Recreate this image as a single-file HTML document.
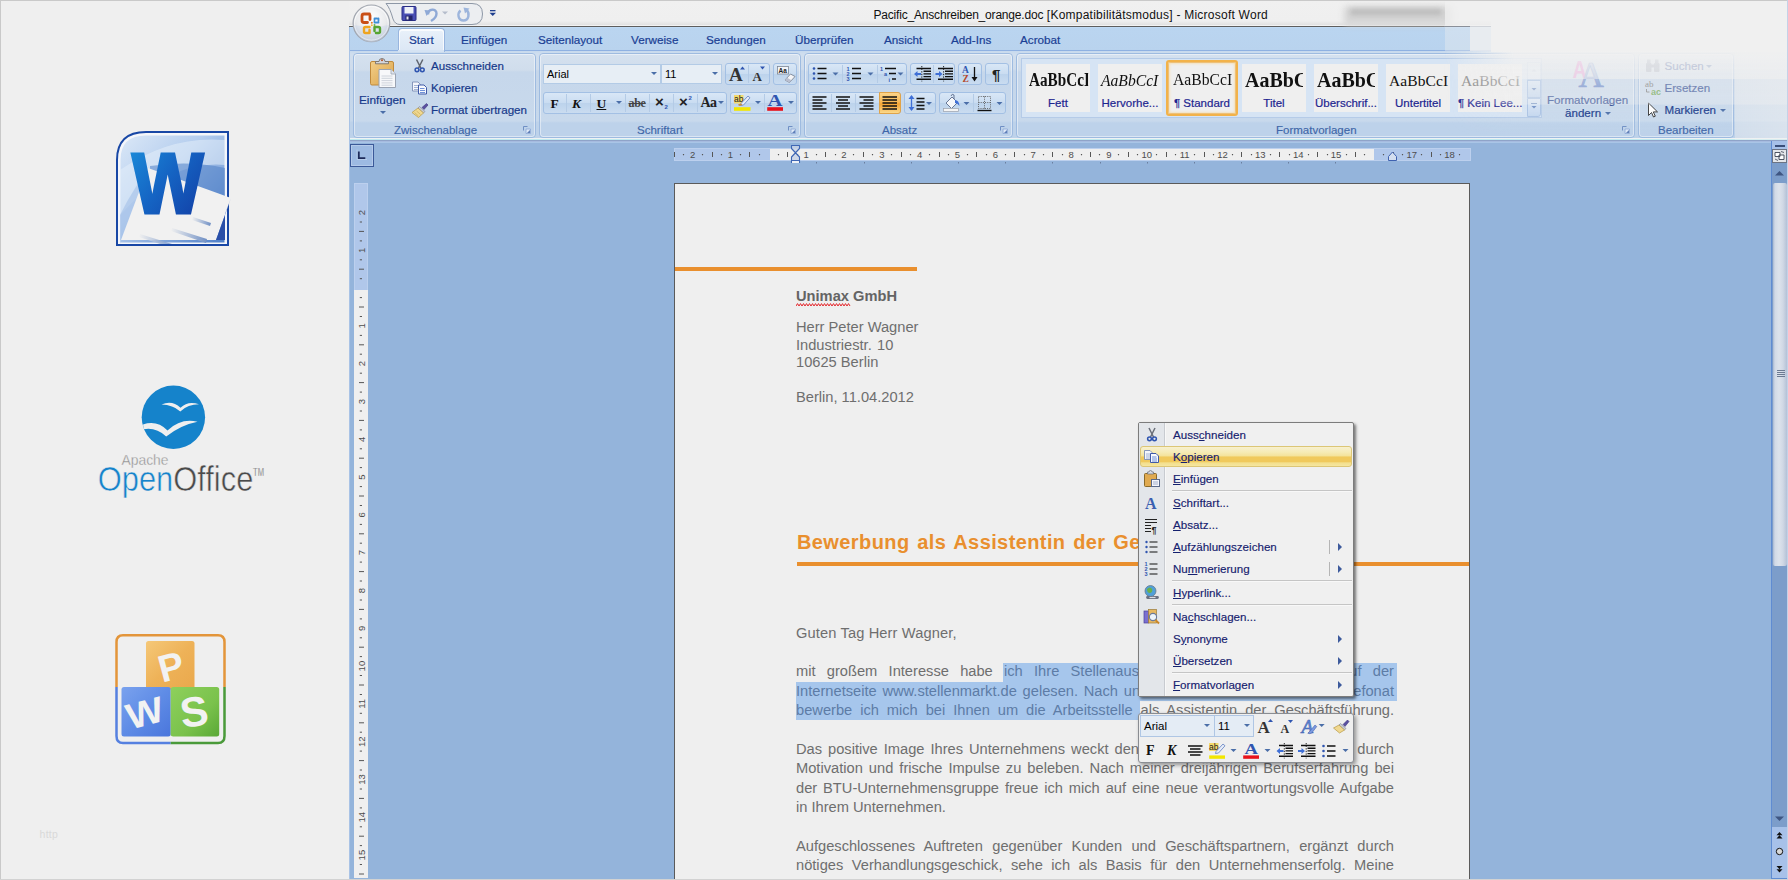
<!DOCTYPE html>
<html lang="de">
<head>
<meta charset="utf-8">
<title>Pacific_Anschreiben_orange.doc - Microsoft Word</title>
<style>
html,body{margin:0;padding:0;}
body{width:1788px;height:880px;overflow:hidden;background:#efefef;position:relative;font-family:"Liberation Sans",sans-serif;font-size:11px;color:#15428b;}
.a{position:absolute;}
.t{position:absolute;white-space:nowrap;line-height:1;}
#frame{position:absolute;left:0;top:0;width:1787px;height:879px;border-left:1px solid #c9c9c9;border-top:1px solid #c9c9c9;box-sizing:border-box;pointer-events:none;z-index:50;}
#frame2{position:absolute;left:0;top:879px;width:1788px;height:1px;background:#d2d2d2;z-index:50;}
#frame3{position:absolute;left:1787px;top:0;width:1px;height:880px;background:#c4d2e8;z-index:50;}
.tab{position:absolute;top:33.300px;font-size:11.700px;color:#1b3f94;-webkit-text-stroke:.2px #1b3f94;white-space:nowrap;line-height:14px;}
.grp{position:absolute;top:53px;height:85px;border:1px solid #9ebbe0;border-radius:4px;box-sizing:border-box;background:linear-gradient(#d5e1ef 0,#d0ddec 16px,#c6d7eb 18px,#c8d9ec 67px,#bdd2ea 69px,#bdd2ea 100%);}
.grp::after{content:"";position:absolute;left:0;top:0;right:0;bottom:0;border:1px solid rgba(255,255,255,.45);border-radius:3px;}
.glab{position:absolute;top:124px;font-size:11px;color:#3e66a8;-webkit-text-stroke:.15px #3e66a8;white-space:nowrap;line-height:13px;text-align:center;}
.rt{position:absolute;margin-top:-.8px;font-size:11px;color:#17398a;-webkit-text-stroke:.2px #17398a;white-space:nowrap;line-height:13px;}
.btng{position:absolute;height:22px;border:1px solid #a3c0e4;border-radius:3px;box-sizing:border-box;background:linear-gradient(#d9e7f6,#c9dcf1 50%,#bcd3ec 51%,#cadcf0);}
.sepv{position:absolute;top:1px;width:1px;height:18px;background:#b4cbe6;}
.combo{position:absolute;height:20px;box-sizing:border-box;border:1px solid #b3cbe6;background:#e7eef5;font-size:11px;color:#000;line-height:18px;padding-left:3px;}
.dd{position:absolute;width:0;height:0;border-left:3px solid transparent;border-right:3px solid transparent;border-top:3px solid #4a6ea8;}
</style>
</head>
<body>
<!-- ===== left panel: logos ===== -->
<svg class="a" style="left:110px;top:125px" width="130" height="130" viewBox="110 125 130 130">
<defs>
<linearGradient id="wbg" x1="0" y1="0" x2="1" y2="1"><stop offset="0" stop-color="#dbe8f7"/><stop offset=".4" stop-color="#b4cdee"/><stop offset="1" stop-color="#4f7fc8"/></linearGradient>
<linearGradient id="wbg2" x1="0" y1="0" x2="1" y2="0"><stop offset="0" stop-color="#cfe0f5" stop-opacity=".9"/><stop offset="1" stop-color="#7da2d8" stop-opacity=".9"/></linearGradient>
<linearGradient id="wfg" x1="0" y1="0" x2="1" y2="1"><stop offset="0" stop-color="#1b8fdb"/><stop offset=".45" stop-color="#1565c4"/><stop offset="1" stop-color="#1238a0"/></linearGradient>
<linearGradient id="pl" x1="0" y1="0" x2="1" y2="0"><stop offset="0" stop-color="#f0f0f0"/><stop offset="1" stop-color="#6f8fc4"/></linearGradient>
<clipPath id="wclip"><path d="M120 244 V160 Q120 135 146 135 H225 V244 Z"/></clipPath>
</defs>
<path d="M117 245 V160 Q117 132 146 132 H228 V245 Z" fill="#f4f6fa" stroke="#1847a5" stroke-width="2" stroke-linejoin="miter"/>
<path d="M120.500 242.500 V160 Q120.500 135.500 146 135.500 H224.500 V242.500 Z" fill="url(#wbg)"/>
<g clip-path="url(#wclip)">
<path d="M120 170 Q170 135 225 140 V165 Q170 160 120 215 Z" fill="#e4eefa" opacity=".55"/>
<path d="M150 166 Q190 160 225 168 V200 L150 175 Z" fill="#4f7fc6" opacity=".55"/>
<path d="M120 215 Q135 185 150 168 L120 244 Z" fill="#a9c4ea" opacity=".7"/>
</g>
<path d="M148 168 L231 198 L216 240 L121 240 Z" fill="#f1f1f1"/>
<path d="M231 198 L216 240 L225 240 L225 214 Z" fill="#2a4fa8"/>
<path d="M193 217 L211 223 L210 226 L192 220 Z" fill="url(#pl)"/>
<path d="M172 228 L207 239 L206 243 L171 231 Z" fill="url(#pl)"/>
<path d="M140 234 L172 244 L160 244 L139 237 Z" fill="url(#pl)" opacity=".8"/>
<text x="167.800" y="212.900" font-family="'Liberation Sans',sans-serif" font-weight="bold" font-size="85.500" text-anchor="middle" textLength="71.500" lengthAdjust="spacingAndGlyphs" fill="url(#wfg)" stroke="url(#wfg)" stroke-width="3" stroke-linejoin="miter">W</text>
</svg>

<svg class="a" style="left:90px;top:380px" width="190" height="130" viewBox="90 380 190 130">
<circle cx="173.400" cy="417.300" r="31.700" fill="#1583cb"/>
<path d="M161.500 404.600 Q172 399.800 180.500 407.800 Q188 400.300 199 404.300 Q188 404.300 180.300 411.400 Q173 405 161.500 404.600 Z" fill="#efefef"/>
<path d="M143 424.500 Q157 419.800 167.500 430.500 Q181 417.800 197.500 421.800 Q181 425 166.200 436.500 Q156 427 143.800 429.200 Z" fill="#efefef"/>
<text x="121.500" y="465.300" font-family="'Liberation Sans',sans-serif" font-size="15" fill="#8c8c8c" stroke="#efefef" stroke-width=".35" textLength="47" lengthAdjust="spacingAndGlyphs">Apache</text>
<text x="97.800" y="491.300" font-family="'Liberation Sans',sans-serif" font-size="35.500" stroke="#efefef" stroke-width=".55" textLength="155.500" lengthAdjust="spacingAndGlyphs"><tspan fill="#1583cb">Open</tspan><tspan fill="#4a4a4a">Office</tspan></text>
<text x="253" y="475.500" font-family="'Liberation Sans',sans-serif" font-size="10" fill="#4a4a4a" stroke="#efefef" stroke-width=".3" textLength="11" lengthAdjust="spacingAndGlyphs">TM</text>
</svg>

<svg class="a" style="left:110px;top:628px" width="124" height="124" viewBox="110 628 124 124">
<defs>
<linearGradient id="po" x1="0" y1="0" x2="1" y2="1"><stop offset="0" stop-color="#f5c878"/><stop offset=".5" stop-color="#eeb258"/><stop offset="1" stop-color="#eaa84c"/></linearGradient>
<linearGradient id="pb" x1="0" y1="0" x2="1" y2="1"><stop offset="0" stop-color="#7aa2ee"/><stop offset=".5" stop-color="#5f8ce6"/><stop offset="1" stop-color="#4a76dc"/></linearGradient>
<linearGradient id="pg" x1="0" y1="0" x2="1" y2="1"><stop offset="0" stop-color="#8ed05c"/><stop offset=".6" stop-color="#7ac24c"/><stop offset="1" stop-color="#5aa836"/></linearGradient>
</defs>
<path d="M116.500 687 V642 Q116.500 635.200 123 635.200 H218 Q224.500 635.200 224.500 642 V687" fill="none" stroke="#e3953a" stroke-width="2.500"/>
<path d="M116.500 687 V736 Q116.500 743 123 743 H170.700" fill="none" stroke="#5580e0" stroke-width="2.500"/>
<path d="M224.500 687 V736 Q224.500 743 218 743 H170.700" fill="none" stroke="#4a9a3a" stroke-width="2.500"/>
<rect x="146" y="641" width="48.500" height="48.500" rx="2.500" fill="url(#po)"/>
<rect x="121.500" y="687" width="49.200" height="49.500" rx="2.500" fill="url(#pb)"/>
<rect x="170.700" y="687" width="48.500" height="49.500" rx="2.500" fill="url(#pg)"/>
<text transform="translate(174.500 679.500) rotate(-15)" font-family="'Liberation Sans',sans-serif" font-weight="bold" font-size="38" text-anchor="middle" fill="#f2f2f2">P</text>
<text transform="translate(148 725) rotate(-15) scale(1.1 1)" font-family="'Liberation Sans',sans-serif" font-weight="bold" font-size="36" text-anchor="middle" fill="#f2f2f2">W</text>
<text transform="translate(196 726) rotate(-8)" font-family="'Liberation Sans',sans-serif" font-weight="bold" font-size="42" text-anchor="middle" fill="#f2f2f2">S</text>
</svg>
<div class="t" style="left:39.500px;top:829px;font-size:10.500px;color:#d9d9d9;letter-spacing:.3px">http</div>
<!-- ===== Word window chrome ===== -->
<div class="a" style="left:349px;top:0;width:1439px;height:880px;background:#94b4db"></div>
<div class="a" style="left:349px;top:0;width:1439px;height:26px;background:linear-gradient(#f0f0f0 0,#efefef 21px,#e1e1e1 25px,#f3f3f3 25px,#f3f3f3 26px)"></div>
<div class="a" style="left:349px;top:26px;width:1095px;height:1px;background:#5e5e5e"></div>
<div class="a" style="left:349px;top:27px;width:1439px;height:24px;background:linear-gradient(#c0dcf8 0,#bad5f0 1.500px,#b9d3ee 100%)"></div>
<div class="a" style="left:349px;top:50px;width:1439px;height:1px;background:#8fb1e2"></div>
<div class="a" style="left:349px;top:51px;width:1439px;height:87px;background:linear-gradient(#c6d9ee 0,#d0deee 3px,#cfdcec 18px,#c5d6ea 20px,#c6d8ec 70px,#bdd2ea 71px,#bdd2ea 100%)"></div>
<div class="a" style="left:349px;top:138px;width:1439px;height:1px;background:#eef2f4"></div>
<div class="a" style="left:349px;top:139px;width:1439px;height:1px;background:#bfeaee"></div>
<div class="a" style="left:349px;top:140px;width:1439px;height:1px;background:#8fa3c8"></div>
<div class="a" style="left:349px;top:141px;width:1439px;height:1px;background:#a6bbdf"></div>
<div class="a" style="left:349px;top:142px;width:1439px;height:1px;background:#a9c5e6"></div>
<!-- left window edge -->
<div class="a" style="left:349px;top:27px;width:1px;height:853px;background:#a9c3e6"></div>

<!-- quick access toolbar -->
<svg class="a" style="left:349px;top:0" width="160" height="52" viewBox="349 0 160 52">
<defs>
<radialGradient id="orb" cx=".5" cy=".35" r=".7"><stop offset="0" stop-color="#ffffff"/><stop offset=".6" stop-color="#e9eaec"/><stop offset="1" stop-color="#b9bec6"/></radialGradient>
</defs>
<path d="M386 3.500 H472 Q482.500 3.500 482.500 14 Q482.500 24.500 472 24.500 H400 Q395 24.500 393 19 Q390 8 386 3.500 Z" fill="#eceef1" stroke="#8d97a6" stroke-width="1"/>
<circle cx="371.400" cy="23.300" r="18.300" fill="url(#orb)" stroke="#a2a7b0" stroke-width="1.200"/>
<circle cx="371.400" cy="23.300" r="16.800" fill="none" stroke="#ffffff" stroke-width="1" opacity=".8"/>
<path d="M354.500 25 a17 17 0 0 0 34 0 q-17 4 -34 0 z" fill="#c9d6ea" opacity=".45"/>
<!-- office logo -->
<g fill="none" stroke-linejoin="round" stroke-linecap="round">
<path d="M369.500 14 H364 Q362 14 362 16 V20.500 Q362 22.500 364 22.500 H367.500 M370 19.500 V15.500" stroke="#c94f16" stroke-width="2.800"/>
<path d="M374.500 18.500 H378.500 V22.500 H374.500 Z" stroke="#3f8fd6" stroke-width="1.800" stroke-dasharray="2.500 1.200"/>
<path d="M369.500 27 H365.500 Q364 27 364 28.500 V31.500 Q364 33 365.500 33 H369.500 V30" stroke="#eea420" stroke-width="2.400"/>
<path d="M374.500 31 V27 H378.500 Q380 27 380 28.500 V31.500 Q380 33 378.500 33 H376" stroke="#55a532" stroke-width="2.400"/>
</g>
<circle cx="371.800" cy="22.800" r="1" fill="#e07b28"/><circle cx="374.500" cy="25" r="1" fill="#6ab04a"/><circle cx="371.800" cy="25.200" r="1" fill="#f0b83a"/>
<!-- save icon -->
<rect x="402" y="6.500" width="14" height="14" rx="1" fill="#4a4fb5" stroke="#2a2e86" stroke-width="1"/>
<rect x="404.500" y="7" width="9" height="6.500" fill="#eef1f8"/>
<rect x="405.500" y="15.500" width="7" height="5" fill="#23246a"/>
<rect x="406.500" y="16.500" width="2" height="3" fill="#e6e6ee"/>
<!-- undo -->
<path d="M428 14.500 C428 8.500 436.500 8 436.500 13.500 C436.500 17 433.500 19.500 431 21" fill="none" stroke="#8fa9d6" stroke-width="2.400"/>
<path d="M424.500 10 L430.500 10.500 L426.500 16 Z" fill="#8fa9d6"/>
<path d="M442 11.500 h6 l-3 3 z" fill="#b4bccb"/>
<!-- redo -->
<path d="M466.500 10 C470 13 469 20.500 463.500 20.500 C458 20.500 457 13.500 460.500 10.500" fill="none" stroke="#9db5dc" stroke-width="2.400"/>
<path d="M463.500 7.500 L469.500 8.500 L465 13.500 Z" fill="#9db5dc"/>
<!-- customize -->
<rect x="490" y="10" width="5.500" height="1.300" fill="#1f3f8f"/>
<path d="M489.500 12.700 h6.500 l-3.250 3.400 z" fill="#1f3f8f"/>
</svg>

<div class="t" style="left:873.500px;top:7.900px;font-size:12px;line-height:14px;color:#111"><span style="letter-spacing:-.19px">Pacific_Anschreiben_orange.doc</span><span style="letter-spacing:.24px"> [Kompatibilitätsmodus] - Microsoft Word</span></div>
<!-- blurred area in title bar -->
<div class="a" style="left:1344px;top:6px;width:108px;height:19px;background:#d4d4d4;filter:blur(3px);border-radius:4px"></div>
<div class="a" style="left:1350px;top:9px;width:92px;height:6px;background:#b8b8b8;filter:blur(2.500px);border-radius:3px;opacity:.9"></div>
<div class="a" style="left:1349px;top:25px;width:95px;height:1px;background:#e4e4e4"></div>
<!-- tabs -->
<div class="a" style="left:397.500px;top:28px;width:47px;height:24px;box-sizing:border-box;border:1px solid #98b5de;border-bottom:none;border-radius:4px 4px 0 0;background:linear-gradient(#e9f1fa,#dbe7f5);box-shadow:inset 0 1px 0 1px rgba(255,255,255,.75)"></div>
<div class="a" style="left:398px;top:50px;width:46px;height:2px;background:#d5e3f3"></div>
<div class="tab" style="left:409px">Start</div>
<div class="tab" style="left:461px">Einfügen</div>
<div class="tab" style="left:538px">Seitenlayout</div>
<div class="tab" style="left:631px">Verweise</div>
<div class="tab" style="left:706px">Sendungen</div>
<div class="tab" style="left:795px">Überprüfen</div>
<div class="tab" style="left:884px">Ansicht</div>
<div class="tab" style="left:951px">Add-Ins</div>
<div class="tab" style="left:1020px">Acrobat</div>
<!-- ===== Ribbon: Zwischenablage ===== -->
<div class="grp" style="left:353px;width:183px"></div>
<svg class="a" style="left:366px;top:56px" width="34" height="34" viewBox="366 56 34 34">
<defs><linearGradient id="clip1" x1="0" y1="0" x2="1" y2="1"><stop offset="0" stop-color="#f3cf88"/><stop offset="1" stop-color="#d9a24a"/></linearGradient></defs>
<rect x="370.500" y="61.500" width="23" height="23.500" rx="1.500" fill="url(#clip1)" stroke="#c08a3c" stroke-width="1"/>
<path d="M375.500 63.800 h13 v-2.300 h-3.500 a3 3 0 0 0 -6 0 h-3.500 z" fill="#d3d6dc" stroke="#77706a" stroke-width=".9"/>
<circle cx="382" cy="60.300" r="1" fill="#b5542a"/>
<path d="M379 69.500 h12 l4.500 4.500 v13.500 h-16.500 z" fill="#f7f8fa" stroke="#9aa3b2" stroke-width="1"/>
<path d="M391 69.500 v4.500 h4.500" fill="#e2e6ee" stroke="#9aa3b2" stroke-width=".8"/>
<path d="M381.500 76 h11 M381.500 78.300 h11 M381.500 80.600 h11 M381.500 82.900 h11 M381.500 85.200 h11" stroke="#c4c9d3" stroke-width=".8"/>
</svg>
<div class="rt" style="left:359px;top:94.800px;font-size:11.800px">Einfügen</div>
<div class="dd" style="left:379.500px;top:111px"></div>
<!-- scissors -->
<svg class="a" style="left:410px;top:57px" width="20" height="18" viewBox="410 57 20 18">
<path d="M416.500 59.500 L420.800 68 M422.800 59.500 L418.500 68" stroke="#5f646e" stroke-width="1.500" fill="none"/>
<circle cx="417" cy="69.800" r="1.900" fill="none" stroke="#2f55b0" stroke-width="1.500"/>
<circle cx="422.300" cy="69.800" r="1.900" fill="none" stroke="#2f55b0" stroke-width="1.500"/>
</svg>
<div class="rt" style="left:431px;top:60px;font-size:11.600px">Ausschneiden</div>
<!-- copy -->
<svg class="a" style="left:410px;top:79px" width="20" height="18" viewBox="410 79 20 18">
<path d="M412.500 82 h5.500 l2.500 2.500 v6.500 h-8 z" fill="#f4f6fb" stroke="#7c8db4" stroke-width=".9"/>
<path d="M414 85.500 h4.500 M414 87.500 h4.500 M414 89.500 h4.500" stroke="#8fa4cc" stroke-width=".8"/>
<path d="M418.500 85 h5.500 l2.500 2.500 v6.500 h-8 z" fill="#f7f9fd" stroke="#3f5aa8" stroke-width="1"/>
<path d="M420 88.500 h4.500 M420 90.500 h5 M420 92.500 h5" stroke="#5f84d4" stroke-width=".9"/>
</svg>
<div class="rt" style="left:431px;top:82px;font-size:11.600px">Kopieren</div>
<!-- format painter -->
<svg class="a" style="left:410px;top:101px" width="20" height="18" viewBox="410 101 20 18">
<path d="M422 107.500 L426.500 103.500 L428 105 L424 109.500 Z" fill="#5a4fa0" stroke="#3d3680" stroke-width=".6"/>
<path d="M419.500 106.500 L425 111.500 L423.500 113 L418 108 Z" fill="#c9ccd4" stroke="#7d828e" stroke-width=".6"/>
<path d="M418 108 L423.500 113 L418.500 117.500 L412 112.500 Z" fill="#f0d890" stroke="#b79a45" stroke-width=".7"/>
<path d="M414.500 112.500 L418.500 116 M416.500 111 L420.500 114.500" stroke="#c9ad5a" stroke-width=".7"/>
</svg>
<div class="rt" style="left:431px;top:104px;font-size:11.600px">Format übertragen</div>
<div class="glab" style="left:394px;font-size:11.500px">Zwischenablage</div>
<svg class="a" style="left:522px;top:125px" width="10" height="10" viewBox="0 0 10 10"><path d="M1.500 5.500 V1.500 H5.500" fill="none" stroke="#6f8fc4" stroke-width="1"/><path d="M4 4 h4.500 v4.500 h-4.500 z" fill="#dfeaf8" stroke="#8aa6d4" stroke-width=".8"/><path d="M8 8 L8 5 L5 8 Z" fill="#5f7fb8"/></svg>

<!-- ===== Ribbon: Schriftart ===== -->
<div class="grp" style="left:539px;width:262px"></div>
<div class="combo" style="left:543px;top:64px;width:118px">Arial</div>
<div class="dd" style="left:650.500px;top:72px"></div>
<div class="combo" style="left:661px;top:64px;width:61px">11</div>
<div class="dd" style="left:711.500px;top:72px"></div>
<div class="btng" style="left:725px;top:63px;width:45px"><div class="sepv" style="left:21.500px"></div></div>
<div class="t" style="left:729px;top:65px;font-family:'Liberation Serif',serif;font-weight:bold;font-size:19px;color:#333">A</div>
<div class="t" style="left:752.500px;top:70px;font-family:'Liberation Serif',serif;font-weight:bold;font-size:13px;color:#333">A</div>
<svg class="a" style="left:738px;top:64px" width="30" height="10" viewBox="738 64 30 10"><path d="M740 69.500 l2.500 -3 l2.500 3 z" fill="#2f55b0"/><path d="M760 66.500 h5 l-2.500 3 z" fill="#2f55b0"/></svg>
<div class="btng" style="left:773px;top:63px;width:24px"></div>
<svg class="a" style="left:775px;top:64px" width="22" height="20" viewBox="775 64 22 20">
<rect x="777.500" y="66.500" width="11" height="7.500" fill="#f3f5fa" stroke="#7d8796" stroke-width=".8"/>
<text x="778.500" y="73" font-family="'Liberation Sans',sans-serif" font-size="6.500" fill="#222" font-weight="bold">Aa</text>
<path d="M785 80 L790.500 74 L795 76.500 L789.500 82.500 Z" fill="#f4f4f6" stroke="#7d8796" stroke-width=".9"/>
<path d="M785 80 L787 77.800 L791.500 80.300 L789.500 82.500 Z" fill="#b9bfd0"/>
</svg>
<!-- row 2 -->
<div class="btng" style="left:543px;top:92px;width:184px">
<div class="sepv" style="left:21.500px"></div><div class="sepv" style="left:45.500px"></div><div class="sepv" style="left:80.500px"></div><div class="sepv" style="left:105px"></div><div class="sepv" style="left:128.500px"></div><div class="sepv" style="left:152.500px"></div></div>
<div class="t" style="left:550.500px;top:97px;font-family:'Liberation Serif',serif;font-weight:bold;font-size:13.500px;color:#111">F</div>
<div class="t" style="left:572px;top:97px;font-family:'Liberation Serif',serif;font-weight:bold;font-style:italic;font-size:13.500px;color:#111">K</div>
<div class="t" style="left:596.500px;top:97px;font-family:'Liberation Serif',serif;font-weight:bold;font-size:13.500px;color:#111;text-decoration:underline">U</div>
<div class="dd" style="left:615.500px;top:101px"></div>
<div class="t" style="left:628.500px;top:97px;font-family:'Liberation Serif',serif;font-weight:bold;font-size:12px;color:#444;text-decoration:line-through;letter-spacing:-.3px">abe</div>
<div class="t" style="left:655px;top:94px;font-family:'Liberation Sans',sans-serif;font-weight:bold;font-size:15px;color:#222">×</div>
<div class="t" style="left:664.500px;top:104px;font-family:'Liberation Sans',sans-serif;font-weight:bold;font-size:6px;color:#2f55b0">2</div>
<div class="t" style="left:679px;top:94px;font-family:'Liberation Sans',sans-serif;font-weight:bold;font-size:15px;color:#222">×</div>
<div class="t" style="left:688.500px;top:95px;font-family:'Liberation Sans',sans-serif;font-weight:bold;font-size:6px;color:#2f55b0">2</div>
<div class="t" style="left:700.500px;top:96px;font-family:'Liberation Serif',serif;font-weight:bold;font-size:14px;color:#222;letter-spacing:-.5px">Aa</div>
<div class="dd" style="left:717.500px;top:101px"></div>
<div class="btng" style="left:730px;top:92px;width:67px"><div class="sepv" style="left:33px"></div></div>
<svg class="a" style="left:732px;top:93px" width="64" height="20" viewBox="732 93 64 20">
<rect x="734" y="95" width="9.500" height="8.500" fill="#f3d96c"/>
<text x="734" y="102" font-family="'Liberation Sans',sans-serif" font-size="8.500" fill="#222">ab</text>
<path d="M741 103.500 L748 96 L750 97.800 L743.500 105 L740.500 105.500 Z" fill="#e8edf8" stroke="#5f7fc0" stroke-width=".8"/>
<path d="M738 104.500 l3 -1 l1.500 1.500 l-3.500 1 z" fill="#c98b3a"/>
<rect x="734" y="107.200" width="16.500" height="3.600" fill="#f2e600"/>
<text x="767.500" y="106" font-family="'Liberation Serif',serif" font-weight="bold" font-size="16" fill="#2f55b0" textLength="15" lengthAdjust="spacingAndGlyphs">A</text>
<rect x="767.200" y="107.200" width="15.800" height="3.600" fill="#e8121c"/>
</svg>
<div class="dd" style="left:754.500px;top:101px"></div>
<div class="dd" style="left:787.500px;top:101px"></div>
<div class="glab" style="left:637px;font-size:11.500px">Schriftart</div>
<svg class="a" style="left:787px;top:125px" width="10" height="10" viewBox="0 0 10 10"><path d="M1.500 5.500 V1.500 H5.500" fill="none" stroke="#6f8fc4" stroke-width="1"/><path d="M4 4 h4.500 v4.500 h-4.500 z" fill="#dfeaf8" stroke="#8aa6d4" stroke-width=".8"/><path d="M8 8 L8 5 L5 8 Z" fill="#5f7fb8"/></svg>
<!-- ===== Ribbon: Absatz ===== -->
<div class="grp" style="left:804px;width:209px"></div>
<div class="btng" style="left:808px;top:63px;width:99px"><div class="sepv" style="left:33px"></div><div class="sepv" style="left:67.500px"></div></div>
<div class="btng" style="left:910px;top:63px;width:45px"><div class="sepv" style="left:21.500px"></div></div>
<div class="btng" style="left:958px;top:63px;width:24px"></div>
<div class="btng" style="left:985px;top:63px;width:24px"></div>
<svg class="a" style="left:808px;top:63px" width="202" height="22" viewBox="808 63 202 22">
<!-- bullets -->
<g fill="#2f55b0"><circle cx="814" cy="68.500" r="1.300"/><circle cx="814" cy="73.500" r="1.300"/><circle cx="814" cy="78.500" r="1.300"/></g>
<path d="M817.500 68.500 h9 M817.500 73.500 h9 M817.500 78.500 h9" stroke="#111" stroke-width="1.300"/>
<path d="M832.500 72.500 h6 l-3 3 z" fill="#4a6ea8"/>
<!-- numbering -->
<g font-family="'Liberation Sans',sans-serif" font-size="5.500" font-weight="bold" fill="#2f55b0"><text x="846.500" y="70.500">1</text><text x="846.500" y="75.500">2</text><text x="846.500" y="80.500">3</text></g>
<path d="M852 68.500 h9 M852 73.500 h9 M852 78.500 h9" stroke="#111" stroke-width="1.300"/>
<path d="M867.500 72.500 h6 l-3 3 z" fill="#4a6ea8"/>
<!-- multilevel -->
<g font-family="'Liberation Sans',sans-serif" font-size="5.500" font-weight="bold" fill="#2f55b0"><text x="880" y="70.500">1</text><text x="884" y="76">a</text><text x="888.500" y="81.500">i</text></g>
<path d="M885 68.500 h11 M889 73.500 h7 M892 79 h4" stroke="#111" stroke-width="1.300"/>
<path d="M897.500 72.500 h6 l-3 3 z" fill="#4a6ea8"/>
<!-- outdent -->
<path d="M916.500 68.500 h14.500 M923.500 71.200 h7.500 M923.500 73.900 h7.500 M923.500 76.600 h7.500 M916.500 79.300 h14.500" stroke="#111" stroke-width="1.400"/>
<path d="M914 73.900 l3.500 -3 v2 h3.500 v2 h-3.500 v2 z" fill="#3f6fd6"/>
<path d="M921.800 66 v16" stroke="#111" stroke-width=".9" stroke-dasharray="1.300 1.300"/>
<!-- indent -->
<path d="M938 68.500 h15 M945 71.200 h8 M945 73.900 h8 M945 76.600 h8 M938 79.300 h15" stroke="#111" stroke-width="1.400"/>
<path d="M942.500 73.900 l-3.500 -3 v2 h-3.500 v2 h3.500 v2 z" fill="#3f6fd6"/>
<path d="M943.600 66 v16" stroke="#111" stroke-width=".9" stroke-dasharray="1.300 1.300"/>
<!-- sort -->
<text x="962" y="73" font-family="'Liberation Serif',serif" font-size="9.500" font-weight="bold" fill="#2f55b0">A</text>
<text x="962.500" y="81.500" font-family="'Liberation Serif',serif" font-size="9.500" font-weight="bold" fill="#b5482a">Z</text>
<path d="M974.500 67 v12" stroke="#111" stroke-width="1.300"/><path d="M971.500 77 h6 l-3 4.500 z" fill="#111"/>
<!-- pilcrow -->
<text x="992" y="80" font-family="'Liberation Sans',sans-serif" font-size="15" font-weight="bold" fill="#222">¶</text>
</svg>
<!-- row 2 -->
<div class="btng" style="left:808px;top:92px;width:93px"><div class="a" style="left:70px;top:-1px;width:22px;height:22px;background:linear-gradient(#fbd48a,#f9b954 45%,#f5a433 55%,#fbd98c);border:1px solid #e0a349;box-sizing:border-box;border-radius:0 3px 3px 0"></div><div class="sepv" style="left:21.500px"></div><div class="sepv" style="left:45.500px"></div></div>
<div class="btng" style="left:904px;top:92px;width:32px"></div>
<div class="btng" style="left:939px;top:92px;width:67px"><div class="sepv" style="left:33px"></div></div>
<svg class="a" style="left:808px;top:92px" width="202" height="22" viewBox="808 92 202 22">
<path d="M812.500 97.500 h14 M812.500 100.500 h10 M812.500 103.500 h14 M812.500 106.500 h10 M812.500 109.500 h14" stroke="#111" stroke-width="1.300" transform="translate(0 -.5)"/>
<path d="M836 97 h14 M838 100 h10 M836 103 h14 M838 106 h10 M836 109 h14" stroke="#111" stroke-width="1.300"/>
<path d="M859.500 97 h14 M863.500 100 h10 M859.500 103 h14 M863.500 106 h10 M859.500 109 h14" stroke="#111" stroke-width="1.300"/>
<path d="M882.500 97 h14.500 M882.500 100 h14.500 M882.500 103 h14.500 M882.500 106 h14.500 M882.500 109 h14.500" stroke="#111" stroke-width="1.500"/>
<!-- line spacing -->
<path d="M911.500 96 v14" stroke="#3f6fd6" stroke-width="1.300"/><path d="M908.500 99 l3 -4 l3 4 z M908.500 107 l3 4 l3 -4 z" fill="#3f6fd6"/>
<path d="M916.500 98.500 h8 M916.500 102 h8 M916.500 105.500 h8 M916.500 109 h8" stroke="#111" stroke-width="1.300"/>
<path d="M926 102 h6 l-3 3 z" fill="#4a6ea8"/>
<!-- shading bucket -->
<path d="M946 103 l6 -6 l5.500 5.500 l-6 6 z" fill="#f5f7fb" stroke="#5a6a8a" stroke-width=".9"/>
<path d="M951 96 q1 -3 3 -1 v4" fill="none" stroke="#5a6a8a" stroke-width=".9"/>
<path d="M955 100 q4 0 4.500 6 q-2 -3 -4.500 -3 z" fill="#3f6fd6"/>
<rect x="943.500" y="108.500" width="15" height="3" fill="#f4f4f4" stroke="#9aa0ac" stroke-width=".7"/>
<path d="M963.500 102 h6 l-3 3 z" fill="#4a6ea8"/>
<!-- borders -->
<path d="M978.500 96.500 h12 v12 h-12 z M984.500 96.500 v12 M978.500 102.500 h12" fill="none" stroke="#555" stroke-width=".9" stroke-dasharray="1 1.200"/>
<path d="M977.500 110.500 h14" stroke="#111" stroke-width="1.400"/>
<path d="M996.500 102 h6 l-3 3 z" fill="#4a6ea8"/>
</svg>
<div class="glab" style="left:882px;font-size:11.500px">Absatz</div>
<svg class="a" style="left:999px;top:125px" width="10" height="10" viewBox="0 0 10 10"><path d="M1.500 5.500 V1.500 H5.500" fill="none" stroke="#6f8fc4" stroke-width="1"/><path d="M4 4 h4.500 v4.500 h-4.500 z" fill="#dfeaf8" stroke="#8aa6d4" stroke-width=".8"/><path d="M8 8 L8 5 L5 8 Z" fill="#5f7fb8"/></svg>

<!-- ===== Ribbon: Formatvorlagen ===== -->
<div class="grp" style="left:1016px;width:619px"></div>
<div class="a" style="left:1021px;top:58px;width:521px;height:60px;box-sizing:border-box;border:1px solid #b5cbe8;background:#d6e4f4"></div>
<style>
.sty{position:absolute;top:64px;width:64px;height:48px;background:#efefef;}
.sts{position:absolute;white-space:nowrap;line-height:1;color:#111;font-family:"Liberation Serif",serif;}
.stl{position:absolute;top:97px;width:64px;text-align:center;font-size:11.500px;line-height:13px;color:#1d2590;-webkit-text-stroke:.2px #1d2590;white-space:nowrap;}
</style>
<div class="sty" style="left:1026px"></div>
<div class="sty" style="left:1098px"></div>
<div class="a" style="left:1166px;top:60px;width:72px;height:56px;box-sizing:border-box;border:2px solid #f2b24a;border-radius:3px;background:#efefef;box-shadow:inset 0 0 3px 1px #f9d58c,inset 0 0 0 1px #d69a58"></div>
<div class="sty" style="left:1242px"></div>
<div class="sty" style="left:1314px"></div>
<div class="sty" style="left:1386px"></div>
<div class="sty" style="left:1458px"></div>
<div class="sts" style="left:1029px;top:70.500px;font-size:18px;font-weight:bold;width:70px;overflow:hidden;transform:scaleX(.845);transform-origin:0 0">AaBbCcI</div>
<div class="sts" style="left:1101px;top:71.500px;font-size:17px;font-style:italic;transform:scaleX(.92);transform-origin:0 0">AaBbCcI</div>
<div class="sts" style="left:1173px;top:71.300px;font-size:17.500px;transform:scaleX(.894);transform-origin:0 0">AaBbCcI</div>
<div class="sts" style="left:1245px;top:69.500px;font-size:21px;font-weight:bold;width:61px;overflow:hidden;transform:scaleX(.95);transform-origin:0 0">AaBbC</div>
<div class="sts" style="left:1317px;top:69.500px;font-size:21px;font-weight:bold;width:61px;overflow:hidden;transform:scaleX(.95);transform-origin:0 0">AaBbC</div>
<div class="sts" style="left:1389px;top:73px;font-size:15.500px;letter-spacing:.1px">AaBbCcI</div>
<div class="sts" style="left:1461px;top:73px;font-size:15.500px;letter-spacing:.1px;color:#8a8a8a">AaBbCcI</div>
<div class="stl" style="left:1026px">Fett</div>
<div class="stl" style="left:1098px">Hervorhe...</div>
<div class="stl" style="left:1170px">¶ Standard</div>
<div class="stl" style="left:1242px">Titel</div>
<div class="stl" style="left:1314px">Überschrif...</div>
<div class="stl" style="left:1386px">Untertitel</div>
<div class="stl" style="left:1458px">¶ Kein Lee...</div>
<!-- gallery scroll buttons -->
<div class="a" style="left:1527px;top:62px;width:14px;height:18px;box-sizing:border-box;border:1px solid #c3d5ec;background:#d9e6f5"></div>
<div class="a" style="left:1527px;top:80px;width:14px;height:18px;box-sizing:border-box;border:1px solid #a9c2e4;background:linear-gradient(#dce8f6,#c3d7ef)"></div>
<div class="a" style="left:1527px;top:98px;width:14px;height:19px;box-sizing:border-box;border:1px solid #a9c2e4;background:linear-gradient(#dce8f6,#c3d7ef);border-radius:0 0 3px 0"></div>
<svg class="a" style="left:1527px;top:62px" width="14" height="56" viewBox="0 0 14 56"><path d="M4.500 9.500 h5 l-2.500 -2.500 z" fill="#c3cfe4"/><path d="M4.500 26 h5 l-2.500 2.500 z" fill="#6f8fc4"/><path d="M4 41.500 h6" stroke="#6f8fc4" stroke-width="1"/><path d="M4.500 44 h5 l-2.500 2.500 z" fill="#6f8fc4"/></svg>
<!-- Formatvorlagen ändern -->
<svg class="a" style="left:1566px;top:56px" width="42" height="34" viewBox="1566 56 42 34">
<defs><linearGradient id="fa" x1="0" y1="0" x2="0" y2="1"><stop offset="0" stop-color="#c9d6f0"/><stop offset="1" stop-color="#3f68c0"/></linearGradient></defs>
<text x="1572.500" y="78.300" font-family="'Liberation Sans',sans-serif" font-size="24" font-weight="bold" fill="#e070c8" textLength="14" lengthAdjust="spacingAndGlyphs">A</text>
<text x="1578.500" y="86.700" font-family="'Liberation Serif',serif" font-size="35" fill="url(#fa)" stroke="#5f80c4" stroke-width=".7">A</text>
</svg>
<div class="rt" style="left:1547px;top:94px;font-size:11.600px">Formatvorlagen</div>
<div class="rt" style="left:1565px;top:107px;font-size:11.600px">ändern</div>
<div class="dd" style="left:1605px;top:112px"></div>
<div class="glab" style="left:1276px;font-size:11.500px">Formatvorlagen</div>
<svg class="a" style="left:1621px;top:125px" width="10" height="10" viewBox="0 0 10 10"><path d="M1.500 5.500 V1.500 H5.500" fill="none" stroke="#6f8fc4" stroke-width="1"/><path d="M4 4 h4.500 v4.500 h-4.500 z" fill="#dfeaf8" stroke="#8aa6d4" stroke-width=".8"/><path d="M8 8 L8 5 L5 8 Z" fill="#5f7fb8"/></svg>

<!-- ===== Ribbon: Bearbeiten ===== -->
<div class="grp" style="left:1638px;width:96px"></div>
<svg class="a" style="left:1643px;top:56px" width="22" height="64" viewBox="1643 56 22 64">
<!-- binoculars -->
<g fill="#8f9ab0"><rect x="1646" y="63" width="5.500" height="9" rx="1"/><rect x="1654" y="63" width="5.500" height="9" rx="1"/><rect x="1647" y="59.500" width="3.500" height="4"/><rect x="1655" y="59.500" width="3.500" height="4"/><rect x="1651" y="64.500" width="3.500" height="3"/></g>
<!-- replace -->
<text x="1645" y="87" font-family="'Liberation Serif',serif" font-size="9" fill="#666">ab</text>
<text x="1651" y="95" font-family="'Liberation Sans',sans-serif" font-size="9" font-weight="bold" fill="#5a9a3a">ac</text>
<path d="M1646.500 89 v3 h3" fill="none" stroke="#666" stroke-width=".9"/>
<!-- cursor -->
<path d="M1648.500 103 v12.500 l3 -3 l2 4.500 l1.800 -.8 l-2 -4.300 h4.200 z" fill="#fff" stroke="#222" stroke-width=".9" stroke-linejoin="round"/>
</svg>
<div class="rt" style="left:1664.500px;top:60px;font-size:11.600px">Suchen</div>
<div class="dd" style="left:1706px;top:65px"></div>
<div class="rt" style="left:1664.500px;top:82px;font-size:11.600px">Ersetzen</div>
<div class="rt" style="left:1664.500px;top:104px;font-size:11.600px">Markieren</div>
<div class="dd" style="left:1719.500px;top:109px"></div>
<div class="glab" style="left:1658px;font-size:11.500px">Bearbeiten</div>

<!-- whitish overlay on right part of chrome -->
<div class="a" style="left:1444.800px;top:27px;width:25.200px;height:24px;background:rgba(240,240,240,.38)"></div>
<div class="a" style="left:1470px;top:27px;width:21px;height:24px;background:rgba(240,240,240,.85)"></div>
<div class="a" style="left:1491px;top:0;width:297px;height:52px;background:#f0f0f0"></div>
<div class="a" style="left:1444.800px;top:0;width:46.200px;height:26px;background:rgba(240,240,240,.78)"></div>
<div class="a" style="left:1444px;top:26px;width:26px;height:1px;background:#8a8f98"></div>
<div class="a" style="left:1470px;top:26px;width:21px;height:1px;background:#d0d3d8"></div>
<div class="a" style="left:1444px;top:51px;width:344px;height:89px;background:linear-gradient(rgba(240,240,240,.96) 0,rgba(240,240,240,.9) 6px,rgba(240,240,240,.8) 14px,rgba(240,240,240,.76) 27.500px,rgba(240,240,240,.44) 28.500px,rgba(240,240,240,.4) 53px,rgba(240,240,240,.09) 54px,rgba(240,240,240,.05) 71px,rgba(240,240,240,0) 89px);-webkit-mask-image:linear-gradient(to right,transparent 0,#000 70px);mask-image:linear-gradient(to right,transparent 0,#000 70px)"></div>
<div class="a" style="left:1735px;top:51px;width:53px;height:89px;background:linear-gradient(to right,rgba(240,240,240,.4),rgba(240,240,240,.55))"></div>
<!-- ===== rulers ===== -->
<div class="a" style="left:349.500px;top:143.500px;width:24px;height:23px;box-sizing:border-box;border:1px solid #3b5998;background:#9dbae2"></div>
<div class="a" style="left:350.500px;top:144.500px;width:22px;height:21px;box-sizing:border-box;border:1px solid #b4caea"></div>
<svg class="a" style="left:350px;top:144px" width="23" height="22" viewBox="0 0 23 22"><path d="M8.800 7.500 v6.700 h6.500" fill="none" stroke="#1d2a5a" stroke-width="1.800"/><path d="M7 5.500 v10 h10" fill="none" stroke="#c7d7ef" stroke-width="1" opacity=".6"/></svg>
<div class="a" style="left:674px;top:148px;width:797px;height:13px;background:#b0c7ea;box-sizing:border-box;border:1px solid #bcd0ee"></div>
<div class="a" style="left:770px;top:149px;width:604px;height:11px;background:#efefef"></div>
<svg class="a" style="left:674px;top:143px" width="800" height="22" viewBox="674 143 800 22">
<path d="M674.5 152v5 M712.5 152v5 M749.5 152v5 M787.5 152v5 M825.5 152v5 M863.5 152v5 M901.5 152v5 M939.5 152v5 M976.5 152v5 M1014.5 152v5 M1052.5 152v5 M1090.5 152v5 M1128.5 152v5 M1166.5 152v5 M1204.5 152v5 M1241.5 152v5 M1279.5 152v5 M1317.5 152v5 M1355.5 152v5 M1393.5 152v5 M1431.5 152v5" stroke="#565656" stroke-width="1"/>
<path d="M683.5 154v1.3 M702.5 154v1.3 M721.5 154v1.3 M740.5 154v1.3 M759.5 154v1.3 M778.5 154v1.3 M797.5 154v1.3 M816.5 154v1.3 M835.5 154v1.3 M853.5 154v1.3 M872.5 154v1.3 M891.5 154v1.3 M910.5 154v1.3 M929.5 154v1.3 M948.5 154v1.3 M967.5 154v1.3 M986.5 154v1.3 M1005.5 154v1.3 M1024.5 154v1.3 M1043.5 154v1.3 M1062.5 154v1.3 M1081.5 154v1.3 M1099.5 154v1.3 M1118.5 154v1.3 M1137.5 154v1.3 M1156.5 154v1.3 M1175.5 154v1.3 M1194.5 154v1.3 M1213.5 154v1.3 M1232.5 154v1.3 M1251.5 154v1.3 M1270.5 154v1.3 M1289.5 154v1.3 M1308.5 154v1.3 M1327.5 154v1.3 M1346.5 154v1.3 M1364.5 154v1.3 M1383.5 154v1.3 M1402.5 154v1.3 M1421.5 154v1.3 M1440.5 154v1.3 M1459.5 154v1.3" stroke="#565656" stroke-width="1.2"/>
<g font-family="'Liberation Sans',sans-serif" font-size="9.500" fill="#4d4d4d" text-anchor="middle">
<text x="692.6" y="158">2</text>
<text x="730.4" y="158">1</text>
<text x="806.1" y="158">1</text>
<text x="844.0" y="158">2</text>
<text x="881.8" y="158">3</text>
<text x="919.7" y="158">4</text>
<text x="957.5" y="158">5</text>
<text x="995.4" y="158">6</text>
<text x="1033.2" y="158">7</text>
<text x="1071.1" y="158">8</text>
<text x="1109.0" y="158">9</text>
<text x="1146.8" y="158">10</text>
<text x="1184.7" y="158">11</text>
<text x="1222.5" y="158">12</text>
<text x="1260.3" y="158">13</text>
<text x="1298.2" y="158">14</text>
<text x="1336.0" y="158">15</text>
<text x="1411.8" y="158">17</text>
<text x="1449.6" y="158">18</text>
</g>
<path d="M816.5 162v1.5 M864.5 162v1.5 M911.5 162v1.5 M958.5 162v1.5 M1005.5 162v1.5 M1052.5 162v1.5 M1100.5 162v1.5 M1147.5 162v1.5 M1194.5 162v1.5 M1241.5 162v1.5 M1288.5 162v1.5 M1335.5 162v1.5" stroke="#6b7f9f" stroke-width="1"/>
<path d="M791.500 145.500 h8 v3 l-8 8.500 v3.500 h8 v-3.500 l-8 -8.500 z" fill="#c9d4e6" fill-opacity=".85" stroke="#3f66b4" stroke-width="1.100" stroke-linejoin="round"/>
<path d="M791.500 160.500 v2.500 M799.500 160.500 v2.500" stroke="#3f66b4" stroke-width="1.100"/><rect x="792" y="161" width="7" height="2" fill="#eef1f6"/>
<path d="M1388.500 160.500 v-4 l4 -4.500 l4 4.500 v4 z" fill="#d3deef" stroke="#3f62b0" stroke-width="1"/>
</svg>
<div class="a" style="left:354px;top:183px;width:14px;height:695px;background:#b0c7ea;box-sizing:border-box;border:1px solid #bcd0ee;border-bottom:none"></div>
<div class="a" style="left:354px;top:290px;width:14px;height:588px;background:#efefef"></div>
<svg class="a" style="left:352px;top:183px" width="18" height="697" viewBox="352 183 18 697">
<path d="M359 231.4h5 M359 269.2h5 M359 307.0h5 M359 344.8h5 M359 382.6h5 M359 420.4h5 M359 458.2h5 M359 496.0h5 M359 533.8h5 M359 571.6h5 M359 609.4h5 M359 647.2h5 M359 685.0h5 M359 722.8h5 M359 760.6h5 M359 798.4h5 M359 836.2h5 M359 874.0h5" stroke="#565656" stroke-width="1"/>
<path d="M359.800 222.0h2.200 M359.800 240.9h2.200 M359.800 259.8h2.200 M359.800 278.7h2.200 M359.800 297.6h2.200 M359.800 316.5h2.200 M359.800 335.4h2.200 M359.800 354.2h2.200 M359.800 373.2h2.200 M359.800 392.1h2.200 M359.800 411.0h2.200 M359.800 429.9h2.200 M359.800 448.8h2.200 M359.800 467.6h2.200 M359.800 486.6h2.200 M359.800 505.5h2.200 M359.800 524.4h2.200 M359.800 543.2h2.200 M359.800 562.1h2.200 M359.800 581.0h2.200 M359.800 600.0h2.200 M359.800 618.9h2.200 M359.800 637.8h2.200 M359.800 656.6h2.200 M359.800 675.5h2.200 M359.800 694.5h2.200 M359.800 713.3h2.200 M359.800 732.2h2.200 M359.800 751.1h2.200 M359.800 770.0h2.200 M359.800 789.0h2.200 M359.800 807.9h2.200 M359.800 826.8h2.200 M359.800 845.6h2.200 M359.800 864.5h2.200" stroke="#565656" stroke-width="1"/>
<g font-family="'Liberation Sans',sans-serif" font-size="9.500" fill="#4d4d4d" text-anchor="middle">
<text transform="translate(365 212.5) rotate(-90)">2</text>
<text transform="translate(365 250.3) rotate(-90)">1</text>
<text transform="translate(365 325.9) rotate(-90)">1</text>
<text transform="translate(365 363.7) rotate(-90)">2</text>
<text transform="translate(365 401.5) rotate(-90)">3</text>
<text transform="translate(365 439.3) rotate(-90)">4</text>
<text transform="translate(365 477.1) rotate(-90)">5</text>
<text transform="translate(365 514.9) rotate(-90)">6</text>
<text transform="translate(365 552.7) rotate(-90)">7</text>
<text transform="translate(365 590.5) rotate(-90)">8</text>
<text transform="translate(365 628.3) rotate(-90)">9</text>
<text transform="translate(365 666.1) rotate(-90)">10</text>
<text transform="translate(365 703.9) rotate(-90)">11</text>
<text transform="translate(365 741.7) rotate(-90)">12</text>
<text transform="translate(365 779.5) rotate(-90)">13</text>
<text transform="translate(365 817.3) rotate(-90)">14</text>
<text transform="translate(365 855.1) rotate(-90)">15</text>
</g>
</svg>
<!-- ===== document page ===== -->
<style>
.dl{position:absolute;left:796px;width:598px;font-size:14.670px;line-height:19px;color:#6e6e6e;white-space:nowrap;text-align:justify;text-align-last:justify;white-space:normal;height:19px;overflow:visible;}
.dn{position:absolute;left:796px;font-size:14.670px;line-height:19px;color:#6e6e6e;white-space:nowrap;}
.sel{color:#5d7ca6;}
</style>
<div class="a" style="left:674px;top:183px;width:796px;height:700px;box-sizing:border-box;border:1px solid #5a5a5a;background:#efefef"></div>
<div class="a" style="left:675px;top:266.500px;width:242px;height:4px;background:#e98f2e"></div>
<div class="dn" style="top:287px;font-weight:bold;color:#646464">Unimax GmbH</div>
<svg class="a" style="left:796px;top:302.500px" width="56" height="4" viewBox="0 0 56 4"><path d="M0 3 L1.5 0.6 L3.0 3.0 L4.5 0.6 L6.0 3.0 L7.5 0.6 L9.0 3.0 L10.5 0.6 L12.0 3.0 L13.5 0.6 L15.0 3.0 L16.5 0.6 L18.0 3.0 L19.5 0.6 L21.0 3.0 L22.5 0.6 L24.0 3.0 L25.5 0.6 L27.0 3.0 L28.5 0.6 L30.0 3.0 L31.5 0.6 L33.0 3.0 L34.5 0.6 L36.0 3.0 L37.5 0.6 L39.0 3.0 L40.5 0.6 L42.0 3.0 L43.5 0.6 L45.0 3.0 L46.5 0.6 L48.0 3.0 L49.5 0.6 L51.0 3.0 L52.5 0.6 L54.0 3.0" fill="none" stroke="#e3262b" stroke-width="1"/></svg>
<div class="dn" style="top:318px">Herr Peter Wagner</div>
<div class="dn" style="top:336px;word-spacing:1.200px">Industriestr. 10</div>
<div class="dn" style="top:353px">10625 Berlin</div>
<div class="dn" style="top:388px">Berlin, 11.04.2012</div>
<div class="t" style="left:797px;top:530px;font-size:20px;line-height:24px;font-weight:bold;color:#e98f2e;letter-spacing:.4px;word-spacing:1.800px">Bewerbung als Assistentin der Geschäftsführung</div>
<div class="a" style="left:797px;top:561.500px;width:672px;height:4px;background:#e98f2e"></div>
<div class="dn" style="top:624px;letter-spacing:.12px">Guten Tag Herr Wagner,</div>
<!-- selection highlight -->
<div class="a" style="left:1003px;top:663px;width:394px;height:19px;background:#a6c6ec"></div>
<div class="a" style="left:796px;top:682px;width:601px;height:19px;background:#a6c6ec"></div>
<div class="a" style="left:796px;top:701px;width:344px;height:19px;background:#a6c6ec"></div>
<!-- paragraph 1 -->
<div class="dn" style="top:662px;word-spacing:7.200px">mit großem Interesse habe <span class="sel">ich Ihre Stellenausschreibung</span></div>
<div class="dn sel" style="top:662px;left:auto;right:394px;word-spacing:7.200px">vom 01.04. auf der</div>
<div class="dn sel" style="top:681.500px;word-spacing:1.700px">Internetseite www.stellenmarkt.de gelesen. Nach unserem</div>
<div class="dn sel" style="top:681.500px;left:auto;right:394px;word-spacing:1.700px">freundlichen Telefonat</div>
<div class="dl" style="top:700.500px"><span class="sel">bewerbe ich mich bei Ihnen um die Arbeitsstelle</span> als Assistentin der Geschäftsführung.</div>
<!-- paragraph 2 -->
<div class="dn" style="top:739.500px;word-spacing:1.900px">Das positive Image Ihres Unternehmens weckt den Wunsch,</div>
<div class="dn" style="top:739.500px;left:auto;right:394px;word-spacing:1.900px">Ihr Team durch</div>
<div class="dl" style="top:759px">Motivation und frische Impulse zu beleben. Nach meiner dreijährigen Berufserfahrung bei</div>
<div class="dl" style="top:778.500px">der BTU-Unternehmensgruppe freue ich mich auf eine neue verantwortungsvolle Aufgabe</div>
<div class="dn" style="top:798px">in Ihrem Unternehmen.</div>
<!-- paragraph 3 -->
<div class="dl" style="top:836.500px">Aufgeschlossenes Auftreten gegenüber Kunden und Geschäftspartnern, ergänzt durch</div>
<div class="dl" style="top:856px">nötiges Verhandlungsgeschick, sehe ich als Basis für den Unternehmenserfolg. Meine</div>
<!-- ===== vertical scrollbar ===== -->
<div class="a" style="left:1771px;top:141px;width:16px;height:739px;background:#a7c1e9"></div>
<div class="a" style="left:1771px;top:141px;width:1px;height:739px;background:#5f8cd2"></div>
<div class="a" style="left:1772px;top:163px;width:15px;height:664px;background:#7c9dca"></div>
<div class="a" style="left:1775px;top:145px;width:10px;height:2px;background:#3a4f7a"></div>
<div class="a" style="left:1772px;top:149px;width:15px;height:14px;box-sizing:border-box;border:1px solid #6c7484;background:#e4e6ea"></div>
<svg class="a" style="left:1772px;top:149px" width="15" height="14" viewBox="0 0 15 14"><path d="M3 3.500 h5 v4 h-5 z M7 6 h5 v4.500 h-5 z" fill="#fff" stroke="#3d4454" stroke-width=".9"/><path d="M9 2.500 l3 1 M3 10 l3 1.500" stroke="#3d4454" stroke-width=".8"/></svg>
<div class="a" style="left:1772px;top:165px;width:15px;height:17px;background:#7c9dca"></div>
<svg class="a" style="left:1772px;top:165px" width="15" height="17" viewBox="0 0 15 17"><path d="M3 10.500 h9 l-4.500 -4.500 z" fill="#3f5682"/></svg>
<div class="a" style="left:1773px;top:183px;width:14px;height:383px;background:linear-gradient(to right,#a9b9d2 0,#d2dae6 2px,#dde3ec 6px,#d0d8e5 10px,#b4c1d6 14px);border-radius:2px"></div>
<div class="a" style="left:1777px;top:370px;width:8px;height:1px;background:#6c7a92;box-shadow:0 2px 0 #6c7a92,0 4px 0 #6c7a92,0 6px 0 #6c7a92"></div>
<svg class="a" style="left:1772px;top:810px" width="15" height="70" viewBox="0 0 15 70"><path d="M3 6.500 h9 l-4.500 4.500 z" fill="#3f5682"/>
<path d="M7.500 22 l3 3.200 h-6 z M7.500 25.200 l3 3.200 h-6 z" fill="#111"/>
<circle cx="7.500" cy="41.500" r="3.200" fill="#d8d8d8" stroke="#111" stroke-width="1"/>
<path d="M7.500 59.200 l3 -3.200 h-6 z M7.500 62.400 l3 -3.200 h-6 z" fill="#111"/></svg>
<div class="a" style="left:1772px;top:878px;width:15px;height:1px;background:#5f8cd2"></div>

<!-- ===== context menu ===== -->
<style>
.mi{position:absolute;left:1173px;font-size:11.600px;line-height:14px;color:#15206e;-webkit-text-stroke:.15px #15206e;white-space:nowrap;}
.mi u{text-decoration:underline;text-underline-offset:1px}
.msep{position:absolute;left:1172px;width:180px;height:1px;background:#c5c5c5;box-shadow:0 1px 0 #f8f8f8}
.marr{position:absolute;left:1338px;width:0;height:0;border-top:4px solid transparent;border-bottom:4px solid transparent;border-left:4px solid #3d5a9c;}
</style>
<div class="a" style="left:1138px;top:422px;width:216px;height:275px;box-sizing:border-box;border:1px solid #7c7c7c;border-radius:2px;background:#f0f0f0;box-shadow:2px 2px 3px rgba(0,0,0,.5)"></div>
<div class="a" style="left:1139px;top:423px;width:25px;height:273px;background:#e3e6ea"></div>
<div class="a" style="left:1164px;top:423px;width:1px;height:273px;background:#c8cbd0"></div>
<div class="a" style="left:1165px;top:423px;width:1px;height:273px;background:#f8f8f8"></div>
<!-- highlighted item -->
<div class="a" style="left:1140px;top:446px;width:212px;height:21px;box-sizing:border-box;border:1px solid #dcc676;border-radius:3px;background:linear-gradient(#f7f0cf 0,#f6ebb5 28%,#f4e39c 46%,#f0c95c 53%,#f0c95c 78%,#f3df8c 83%,#f5e6a0 100%)"></div>
<div class="mi" style="top:428px">Auss<u>c</u>hneiden</div>
<div class="mi" style="top:450px">K<u>o</u>pieren</div>
<div class="mi" style="top:472px"><u>E</u>infügen</div>
<div class="msep" style="top:490px"></div>
<div class="mi" style="top:496px"><u>S</u>chriftart...</div>
<div class="mi" style="top:518px"><u>A</u>bsatz...</div>
<div class="mi" style="top:540px"><u>A</u>ufzählungszeichen</div>
<div class="mi" style="top:562px">Nu<u>m</u>merierung</div>
<div class="msep" style="top:580px"></div>
<div class="mi" style="top:586px"><u>H</u>yperlink...</div>
<div class="msep" style="top:604px"></div>
<div class="mi" style="top:610px">Na<u>c</u>hschlagen...</div>
<div class="mi" style="top:632px">S<u>y</u>nonyme</div>
<div class="mi" style="top:654px"><u>Ü</u>bersetzen</div>
<div class="msep" style="top:672px"></div>
<div class="mi" style="top:678px"><u>F</u>ormatvorlagen</div>
<div class="a" style="left:1329px;top:540px;width:1px;height:14px;background:#b5b5b5"></div>
<div class="a" style="left:1329px;top:562px;width:1px;height:14px;background:#b5b5b5"></div>
<div class="marr" style="top:543px"></div>
<div class="marr" style="top:565px"></div>
<div class="marr" style="top:635px"></div>
<div class="marr" style="top:657px"></div>
<div class="marr" style="top:681px"></div>
<!-- menu icons -->
<svg class="a" style="left:1139px;top:423px" width="26" height="210" viewBox="1139 423 26 210">
<!-- scissors -->
<path d="M1149 428 L1153.500 437 M1155 428 L1150.500 437" stroke="#6a6e78" stroke-width="1.500" fill="none"/>
<circle cx="1149.500" cy="438.800" r="1.900" fill="none" stroke="#2f55b0" stroke-width="1.500"/><circle cx="1154.500" cy="438.800" r="1.900" fill="none" stroke="#2f55b0" stroke-width="1.500"/>
<!-- copy -->
<path d="M1144.500 450.500 h5.500 l2.500 2.500 v6.500 h-8 z" fill="#f4f6fb" stroke="#7c8db4" stroke-width=".9"/>
<path d="M1146 454 h4.500 M1146 456 h4.500 M1146 458 h4.500" stroke="#8fa4cc" stroke-width=".8"/>
<path d="M1150.500 453.500 h5.500 l2.500 2.500 v6.500 h-8 z" fill="#f7f9fd" stroke="#3f5aa8" stroke-width="1"/>
<path d="M1152 457 h4.500 M1152 459 h5 M1152 461 h5" stroke="#5f84d4" stroke-width=".9"/>
<!-- paste -->
<rect x="1144.500" y="473.500" width="12" height="13" rx="1" fill="#e0aa50" stroke="#8a6a2a" stroke-width="1"/>
<path d="M1147.500 474 h6 v-2 h-1.500 a1.500 1.500 0 0 0 -3 0 h-1.500 z" fill="#d8dce4" stroke="#6a6f7a" stroke-width=".7"/>
<rect x="1151.500" y="479.500" width="8" height="7" fill="#f4f6fb" stroke="#5a6a8a" stroke-width="1"/>
<path d="M1153 482 h5 M1153 484 h5" stroke="#8fa0c0" stroke-width=".8"/>
<!-- A -->
<text x="1145" y="508.500" font-family="'Liberation Serif',serif" font-weight="bold" font-size="16" fill="#3a5fb0">A</text>
<!-- paragraph -->
<path d="M1145 519.500 h12 M1145 522.500 h12 M1145 525.500 h6 M1145 528.500 h6 M1145 531.500 h6" stroke="#222" stroke-width="1.100"/>
<text x="1151.500" y="533" font-family="'Liberation Sans',sans-serif" font-weight="bold" font-size="9" fill="#222">¶</text>
<!-- bullets -->
<g fill="#2f55b0"><circle cx="1146.500" cy="542" r="1.200"/><circle cx="1146.500" cy="547" r="1.200"/><circle cx="1146.500" cy="552" r="1.200"/></g>
<path d="M1149.500 542 h8 M1149.500 547 h8 M1149.500 552 h8" stroke="#111" stroke-width="1.200"/>
<!-- numbering -->
<g font-family="'Liberation Sans',sans-serif" font-size="5.500" font-weight="bold" fill="#2f55b0"><text x="1144.500" y="566">1</text><text x="1144.500" y="571">2</text><text x="1144.500" y="576">3</text></g>
<path d="M1149.500 564 h8 M1149.500 569 h8 M1149.500 574 h8" stroke="#111" stroke-width="1.200"/>
<!-- hyperlink -->
<circle cx="1150.500" cy="591" r="5.500" fill="#4f9fd8" stroke="#6a7a8a" stroke-width=".8"/>
<path d="M1147 589 q3 -3 5 0 q1 3 -2 4 q-3 0 -3 -4 z" fill="#6ab04a"/>
<path d="M1147.500 597.500 h4 M1153.500 597.500 h4" stroke="#6a7080" stroke-width="2.800" stroke-linecap="round"/><path d="M1149.500 597.500 h6" stroke="#d8dce4" stroke-width="1.200"/>
<!-- research -->
<rect x="1144" y="611" width="4.500" height="12" fill="#7a6fd0" stroke="#4a3f9a" stroke-width=".7"/>
<rect x="1148.500" y="609.500" width="8" height="13.500" fill="#e8b860" stroke="#9a7a3a" stroke-width=".7"/>
<circle cx="1153" cy="617" r="3.600" fill="#eef4fa" stroke="#6a7a9a" stroke-width="1.100"/>
<path d="M1155.500 620 l3.500 3.500" stroke="#c9862a" stroke-width="2"/>
</svg>

<!-- ===== mini toolbar ===== -->
<div class="a" style="left:1138px;top:713px;width:216px;height:50px;box-sizing:border-box;border:1px solid #8a8d92;border-radius:3px;background:#efefef;box-shadow:2px 2px 4px rgba(0,0,0,.4)"></div>
<div class="combo" style="left:1140px;top:715px;width:75px;height:22px;line-height:20px;background:#e4ecf5;border-color:#afc6e4;font-size:11.500px">Arial</div>
<div class="dd" style="left:1203.500px;top:724px"></div>
<div class="combo" style="left:1214px;top:715px;width:40px;height:22px;line-height:20px;background:#e4ecf5;border-color:#afc6e4;font-size:11.500px">11</div>
<div class="dd" style="left:1243.500px;top:724px"></div>
<div class="t" style="left:1257.500px;top:718.500px;font-family:'Liberation Serif',serif;font-weight:bold;font-size:17px;color:#333">A</div>
<div class="t" style="left:1280.500px;top:722.500px;font-family:'Liberation Serif',serif;font-weight:bold;font-size:12px;color:#333">A</div>
<svg class="a" style="left:1138px;top:713px" width="216" height="50" viewBox="1138 713 216 50">
<path d="M1268 722 l2.500 -3 l2.500 3 z" fill="#2f55b0"/><path d="M1288 720 h5 l-2.500 3 z" fill="#2f55b0"/>
<!-- styles A with brush -->
<text x="1301.500" y="732.500" font-family="'Liberation Serif',serif" font-style="italic" font-size="19" fill="#5f86d4" stroke="#3f62b0" stroke-width=".5">A</text>
<path d="M1309.500 731.500 l5.500 -6.500 l1.800 1.500 l-5 6.500 q-2 1.200 -4 .3 z" fill="#7a9ae0" stroke="#3a55a0" stroke-width=".5"/>
<path d="M1318.700 724 h6 l-3 3 z" fill="#4a6ea8"/>
<!-- format painter -->
<path d="M1343 724.500 L1347.500 720 L1349 721.500 L1345 726.500 Z" fill="#5a4fa0" stroke="#3d3680" stroke-width=".6"/>
<path d="M1340.500 723.500 L1346 728.500 L1344.500 730 L1339 725 Z" fill="#c9ccd4" stroke="#7d828e" stroke-width=".6"/>
<path d="M1339 725 L1344.500 730 L1339.500 733 L1333.500 728 Z" fill="#f0d890" stroke="#b79a45" stroke-width=".7"/>
<!-- row 2: center align -->
<path d="M1188 746 h14.500 M1190 749 h10.500 M1188 752 h14.500 M1190 755 h10.500" stroke="#111" stroke-width="1.300"/>
<!-- highlight -->
<rect x="1209" y="743" width="9.500" height="8" fill="#f3d96c"/>
<text x="1209" y="750" font-family="'Liberation Sans',sans-serif" font-size="8.500" fill="#222">ab</text>
<path d="M1216 751.500 L1223 744 L1225 745.800 L1218.500 753 L1215.500 753.500 Z" fill="#e8edf8" stroke="#5f7fc0" stroke-width=".8"/>
<rect x="1209.200" y="755.400" width="15.800" height="3.400" fill="#f2e600"/>
<path d="M1230.500 749 h6 l-3 3 z" fill="#4a6ea8"/>
<!-- font color -->
<text x="1244.500" y="754" font-family="'Liberation Serif',serif" font-weight="bold" font-size="15" fill="#2f55b0" textLength="13.500" lengthAdjust="spacingAndGlyphs">A</text>
<rect x="1243.200" y="755.400" width="15.800" height="3.400" fill="#e8121c"/>
<path d="M1264.500 749 h6 l-3 3 z" fill="#4a6ea8"/>
<!-- outdent -->
<path d="M1279 745.500 h14 M1285.500 748.200 h7.500 M1285.500 750.900 h7.500 M1285.500 753.600 h7.500 M1279 756.300 h14" stroke="#111" stroke-width="1.400"/>
<path d="M1276.500 750.900 l3.500 -3 v2 h3.500 v2 h-3.500 v2 z" fill="#3f6fd6"/>
<path d="M1284.300 743 v16" stroke="#111" stroke-width=".9" stroke-dasharray="1.300 1.300"/>
<!-- indent -->
<path d="M1301 745.500 h14.500 M1307.500 748.200 h8 M1307.500 750.900 h8 M1307.500 753.600 h8 M1301 756.300 h14.500" stroke="#111" stroke-width="1.400"/>
<path d="M1305 750.900 l-3.500 -3 v2 h-3.500 v2 h3.500 v2 z" fill="#3f6fd6"/>
<path d="M1306.200 743 v16" stroke="#111" stroke-width=".9" stroke-dasharray="1.300 1.300"/>
<!-- bullets -->
<g fill="#2f55b0"><circle cx="1323.500" cy="746" r="1.300"/><circle cx="1323.500" cy="751" r="1.300"/><circle cx="1323.500" cy="756" r="1.300"/></g>
<path d="M1327 746 h8.500 M1327 751 h8.500 M1327 756 h8.500" stroke="#111" stroke-width="1.300"/>
<path d="M1342.500 749 h6 l-3 3 z" fill="#4a6ea8"/>
</svg>
<div class="t" style="left:1146px;top:744px;font-family:'Liberation Serif',serif;font-weight:bold;font-size:14px;color:#111">F</div>
<div class="t" style="left:1167px;top:744px;font-family:'Liberation Serif',serif;font-weight:bold;font-style:italic;font-size:14px;color:#111">K</div>
<div id="frame"></div><div id="frame2"></div><div id="frame3"></div>
</body>
</html>
